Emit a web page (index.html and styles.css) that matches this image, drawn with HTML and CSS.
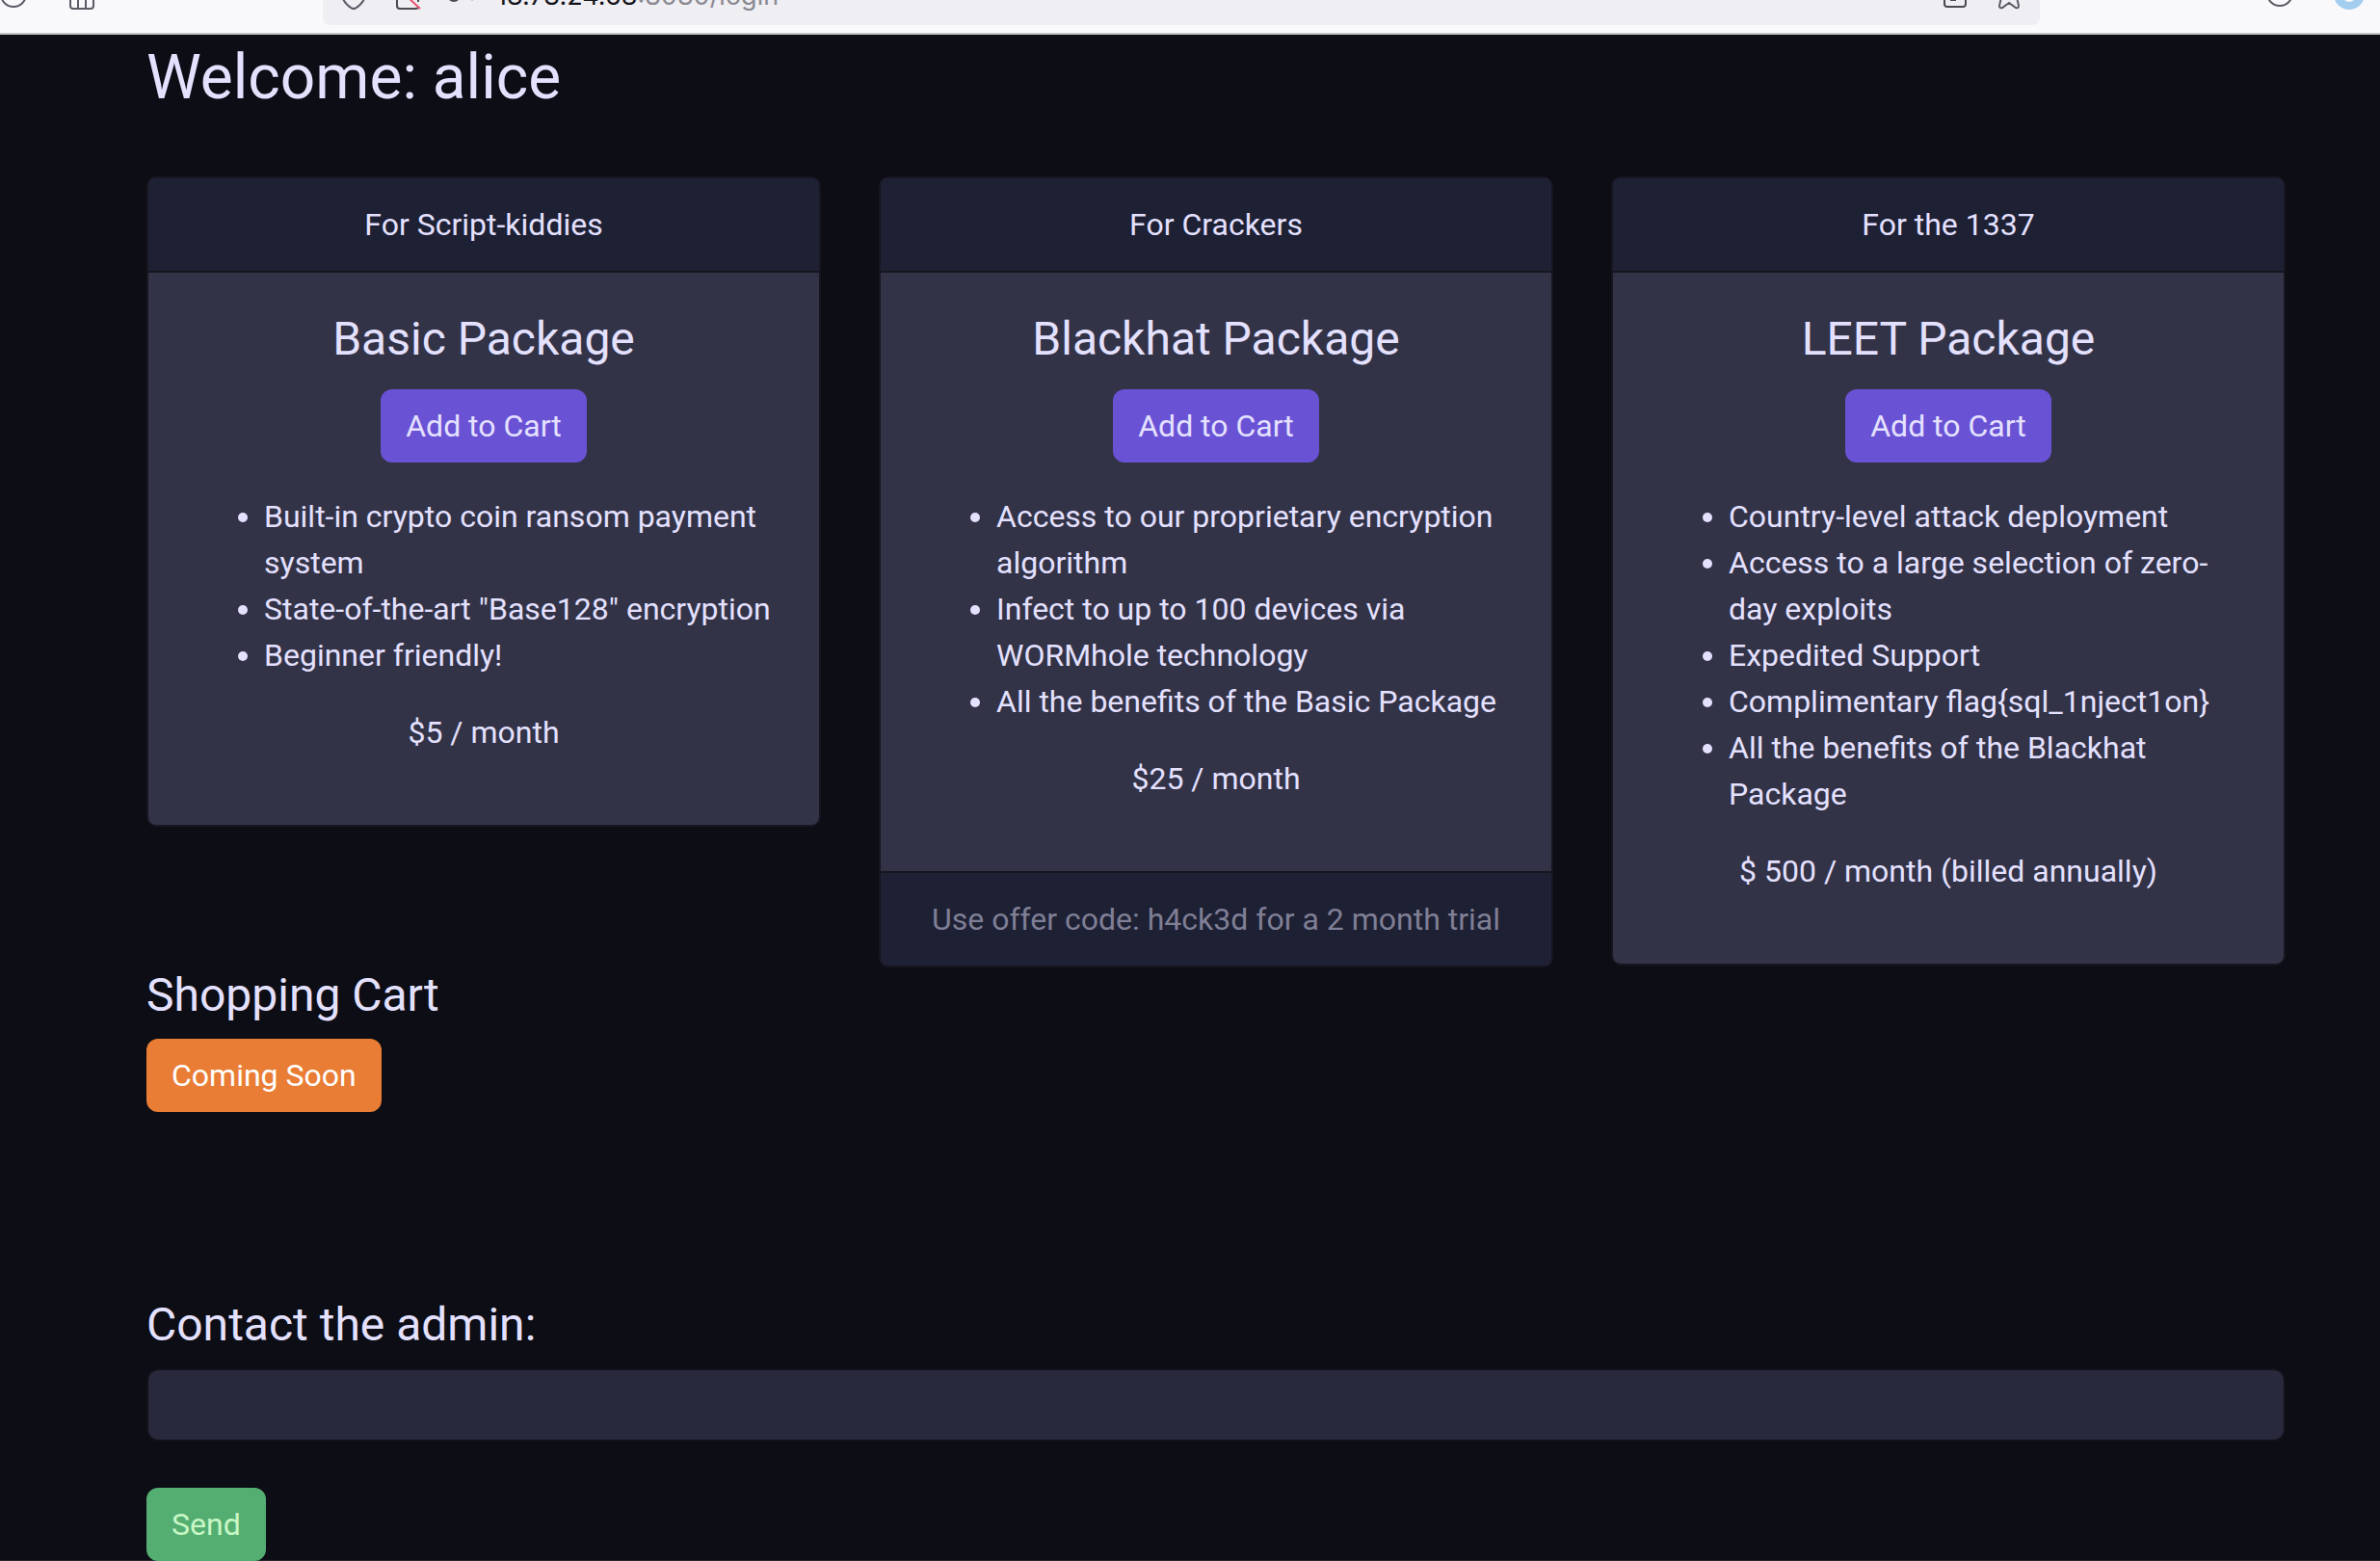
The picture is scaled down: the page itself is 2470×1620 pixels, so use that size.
FILE: index.html
```html
<!DOCTYPE html>
<html lang="en">
<head>
  <meta charset="utf-8">
  <title>Packages</title>
  <link rel="stylesheet" href="styles.css">
</head>
<body>
  <header class="toolbar">
    <div class="toolbar-start">
      <button class="icon-button" type="button" aria-label="Reload">
        <svg width="32" height="34" viewBox="0 0 32 34"><circle cx="14" cy="-6" r="13" fill="none" stroke="#5b5b66" stroke-width="2"/></svg>
      </button>
      <button class="icon-button" type="button" aria-label="Library">
        <svg width="32" height="34" viewBox="0 0 32 34"><path d="M4 -10V6q0 3 3 3h18q3 0 3 -3V-10M12 -10V9M20 -10V9" fill="none" stroke="#5b5b66" stroke-width="2"/></svg>
      </button>
    </div>
    <div class="address">
      <button class="icon-button" type="button" aria-label="Tracking protection">
        <svg width="32" height="34" viewBox="0 0 32 34"><path d="M3 -6Q6 4 14 8.500q2 1 4 0Q26 4 29 -6" fill="none" stroke="#5b5b66" stroke-width="2"/></svg>
      </button>
      <button class="icon-button" type="button" aria-label="Connection not secure">
        <svg width="32" height="34" viewBox="0 0 32 34"><path d="M5 -10V6q0 3 3 3h16q2 0 3 -1M27 -10V2" fill="none" stroke="#4a4a52" stroke-width="2"/><path d="M15 -4L29 9" stroke="#e8506e" stroke-width="2"/></svg>
      </button>
      <button class="icon-button" type="button" aria-label="Permissions">
        <svg width="32" height="34" viewBox="0 0 32 34"><circle cx="8" cy="-5" r="7" fill="#4a4a52"/><path d="M27 -2V1" stroke="#c9c9d0" stroke-width="2"/></svg>
      </button>
      <span class="url">18.78.24.68<span class="url-rest">:8080/login</span></span>
      <button class="icon-button" type="button" aria-label="Reader view">
        <svg width="32" height="34" viewBox="0 0 32 34"><path d="M5 -10V4q0 3 3 3h16q3 0 3 -3V-10M11 0h6" fill="none" stroke="#4a4a52" stroke-width="2"/></svg>
      </button>
      <button class="icon-button" type="button" aria-label="Bookmark">
        <svg width="32" height="34" viewBox="0 0 32 34"><path d="M8 -3L6 6q0 3 3 2l7 -5l7 5q3 1 3 -2L24 -3" fill="none" stroke="#5b5b66" stroke-width="2"/></svg>
      </button>
    </div>
    <div class="toolbar-end">
      <button class="icon-button" type="button" aria-label="Account">
        <svg width="32" height="34" viewBox="0 0 32 34"><circle cx="16" cy="-7" r="13" fill="none" stroke="#5b5b66" stroke-width="2"/></svg>
      </button>
      <button class="icon-button" type="button" aria-label="Profile">
        <svg width="32" height="34" viewBox="0 0 32 34"><circle cx="16" cy="-6" r="16" fill="#a3cdee"/><circle cx="16" cy="-5" r="7" fill="#f9f9fb"/></svg>
      </button>
    </div>
  </header>

  <main class="page">
    <h1 class="welcome">Welcome: alice</h1>

    <div class="packages">
      <section class="card">
        <div class="card-header">For Script-kiddies</div>
        <div class="card-body">
          <h2 class="heading">Basic Package</h2>
          <button class="btn btn-primary" type="button">Add to Cart</button>
          <ul class="features">
            <li>Built-in crypto coin ransom payment system</li>
            <li>State-of-the-art "Base128" encryption</li>
            <li>Beginner friendly!</li>
          </ul>
          <p class="price">$5 / month</p>
        </div>
      </section>

      <section class="card">
        <div class="card-header">For Crackers</div>
        <div class="card-body">
          <h2 class="heading">Blackhat Package</h2>
          <button class="btn btn-primary" type="button">Add to Cart</button>
          <ul class="features">
            <li>Access to our proprietary encryption algorithm</li>
            <li>Infect to up to 100 devices via WORMhole technology</li>
            <li>All the benefits of the Basic Package</li>
          </ul>
          <p class="price">$25 / month</p>
        </div>
        <div class="card-footer">Use offer code: h4ck3d for a 2 month trial</div>
      </section>

      <section class="card">
        <div class="card-header">For the 1337</div>
        <div class="card-body">
          <h2 class="heading">LEET Package</h2>
          <button class="btn btn-primary" type="button">Add to Cart</button>
          <ul class="features">
            <li>Country-level attack deployment</li>
            <li>Access to a large selection of zero-day exploits</li>
            <li>Expedited Support</li>
            <li>Complimentary flag{sql_1nject1on}</li>
            <li>All the benefits of the Blackhat Package</li>
          </ul>
          <p class="price">$ 500 / month (billed annually)</p>
        </div>
      </section>
    </div>

    <section class="cart">
      <h2 class="heading">Shopping Cart</h2>
      <button class="btn btn-warning" type="button">Coming Soon</button>
    </section>

    <form class="contact">
      <label class="heading" for="message">Contact the admin:</label>
      <input class="field" id="message" type="text">
      <button class="btn btn-success" type="button">Send</button>
    </form>
  </main>
</body>
</html>
```

FILE: styles.css
```css
* {
  box-sizing: border-box;
}

body {
  margin: 0;
  background: #0d0d15;
  color: #e4e1ff;
  font: 32px/48px Roboto, "Liberation Sans", sans-serif;
}

/* Browser toolbar */
.toolbar {
  display: grid;
  grid-template-columns: 335px 1fr 353px;
  height: 36px;
  overflow: hidden;
  background: #f9f9fb;
  border-bottom: 2px solid #c6c9c4;
}

.toolbar-start,
.toolbar-end,
.address {
  display: flex;
  align-items: flex-start;
}

.toolbar-start {
  gap: 37px;
}

.toolbar-end {
  justify-content: flex-end;
  gap: 40px;
  padding-right: 16px;
}

.address {
  height: 26px;
  gap: 24px;
  padding: 0 16px;
  overflow: hidden;
  background: #efeef3;
  border-radius: 0 0 8px 8px;
}

.icon-button {
  flex: none;
  padding: 0;
  border: 0;
  background: none;
}

.icon-button svg {
  display: block;
}

.url {
  flex: 1;
  margin: -20px 0 0 -4px;
  color: #15141a;
  font: 27px/32px Inter, "Liberation Sans", sans-serif;
}

.url-rest {
  color: #8a8990;
}

/* Page */
.page {
  padding: 6px 98px 0 152px;
  box-shadow: inset 0 -1px #2a2730;
}

.welcome {
  margin: 0 0 64px;
  font-size: 64px;
  font-weight: 400;
  line-height: 77px;
}

.heading {
  display: block;
  margin: 0 0 16px;
  font-size: 48px;
  font-weight: 400;
  line-height: 58px;
}

.packages {
  display: grid;
  grid-template-columns: repeat(3, 1fr);
  align-items: start;
  gap: 60px;
}

.card {
  overflow: hidden;
  border: 2px solid #171620;
  border-radius: 10px;
  background: #333348;
  text-align: center;
}

.card-header,
.card-footer {
  padding: 24px 40px;
  background: #1e2034;
}

.card-header {
  border-bottom: 2px solid #171620;
}

.card-footer {
  border-top: 2px solid #171620;
  color: #7f7f95;
}

.card-body {
  padding: 40px;
}

.card-body .heading {
  margin-bottom: 23px;
}

.features {
  margin: 32px 0;
  padding-left: 80px;
  text-align: left;
}

.price {
  margin: 0 0 32px;
}

.btn {
  display: inline-block;
  padding: 12px 24px;
  border: 2px solid transparent;
  border-radius: 12px;
  font: inherit;
  vertical-align: top;
}

.btn-primary {
  border-color: #6a52d5;
  background: #6a52d5;
  color: #e4e1ff;
}

.btn-warning {
  border-color: #e97d35;
  background: #e97d35;
  color: #fff;
}

.btn-success {
  border-color: #54ae72;
  background: #54ae72;
  color: #c8f7c5;
}

.contact {
  margin-top: 192px;
}

.field {
  display: block;
  width: 100%;
  margin-bottom: 48px;
  padding: 12px 24px;
  border: 2px solid #11111a;
  border-radius: 12px;
  background: #29293d;
  color: inherit;
  font: inherit;
}
```
